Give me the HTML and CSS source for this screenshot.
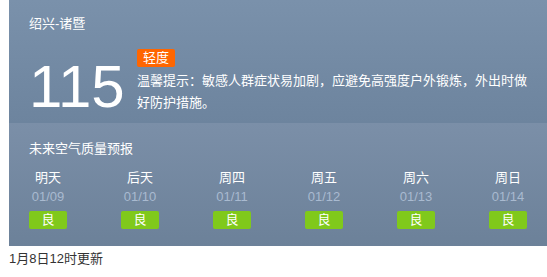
FILE: index.html
```html
<html><head>
  <title>空气质量</title>
  <link rel="stylesheet" href="styles.css">
</head>
<body>
  <div class="aqi-panel">
    <div class="aqi-now">
      <div class="city">绍兴-诸暨</div>
      <div class="now-row">
        <div class="aqi-value">115</div>
        <div class="now-info">
          <span class="level level-light">轻度</span>
          <p class="tip">温馨提示：敏感人群症状易加剧，应避免高强度户外锻炼，外出时做好防护措施。</p>
        </div>
      </div>
    </div>

    <div class="aqi-forecast">
      <div class="forecast-title">未来空气质量预报</div>
      <div class="forecast-list">
        <div class="day">
          <div class="day-name">明天</div>
          <div class="day-date">01/09</div>
          <span class="level level-good">良</span>
        </div>
        <div class="day">
          <div class="day-name">后天</div>
          <div class="day-date">01/10</div>
          <span class="level level-good">良</span>
        </div>
        <div class="day">
          <div class="day-name">周四</div>
          <div class="day-date">01/11</div>
          <span class="level level-good">良</span>
        </div>
        <div class="day">
          <div class="day-name">周五</div>
          <div class="day-date">01/12</div>
          <span class="level level-good">良</span>
        </div>
        <div class="day">
          <div class="day-name">周六</div>
          <div class="day-date">01/13</div>
          <span class="level level-good">良</span>
        </div>
        <div class="day">
          <div class="day-name">周日</div>
          <div class="day-date">01/14</div>
          <span class="level level-good">良</span>
        </div>
      </div>
    </div>
  </div>
  <div class="updated">1月8日12时更新</div>
</body></html>
```

FILE: styles.css
```css
* {
  margin: 0;
  padding: 0;
  box-sizing: border-box;
  font-family: 'Liberation Sans', 'Noto Sans CJK SC', sans-serif;
}

body {
  background: white;
  margin: 0 0 0 9px;
  font-size: 13px;
}

.aqi-panel {
  width: 538px;
  color: white;
}

.aqi-now {
  height: 123px;
  padding: 14px 20px 0;
  background: linear-gradient(#7a91ab, #6d849e);
}

.city {
  line-height: 20px;
}

.now-row {
  display: flex;
  margin-top: 15px;
}

.aqi-value {
  font-size: 60px;
  line-height: 60px;
  margin-top: 8px;
  width: 108px;
}

.now-info {
  flex: 1;
}

.level {
  display: inline-block;
  width: 38px;
  height: 18px;
  line-height: 18px;
  text-align: center;
  border-radius: 2px;
  color: white;
}

.level-light {
  background: #ff6600;
  margin-bottom: 3px;
}

.level-good {
  background: #80c91b;
}

.tip {
  line-height: 22px;
}

.aqi-forecast {
  height: 123px;
  padding: 16px 20px 0;
  background: linear-gradient(#7b8fa8, #6c8199);
}

.forecast-title {
  line-height: 20px;
}

.forecast-list {
  display: flex;
  justify-content: space-between;
  margin-top: 9px;
}

.day {
  width: 38px;
  display: flex;
  flex-direction: column;
  align-items: center;
}

.day-name {
  line-height: 19px;
  white-space: nowrap;
}

.day-date {
  line-height: 20px;
  color: #a9bad0;
  white-space: nowrap;
}

.day .level {
  margin-top: 4px;
}

.updated {
  margin-top: 3px;
  line-height: 20px;
  color: #333;
}
```
